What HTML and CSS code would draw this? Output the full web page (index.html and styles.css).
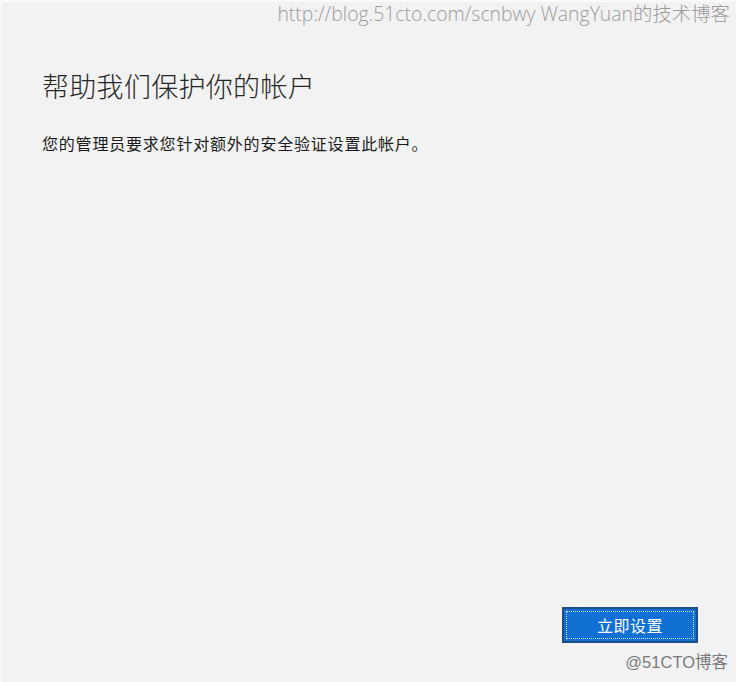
FILE: index.html
```html
<!DOCTYPE html>
<html lang="zh-CN">
<head>
<meta charset="utf-8">
<title>帮助我们保护你的帐户</title>
<link rel="stylesheet" href="styles.css">
</head>
<body>
<div class="page">
  <div class="watermark-top">http://blog.51cto.com/scnbwy WangYuan的技术博客</div>
  <main class="content">
    <h1 class="title">帮助我们保护你的帐户</h1>
    <p class="desc">您的管理员要求您针对额外的安全验证设置此帐户。</p>
  </main>
  <div class="actions">
    <button class="btn-primary" type="button">立即设置</button>
  </div>
  <div class="watermark-bottom">@51CTO博客</div>
</div>
</body>
</html>
```

FILE: styles.css
```css
html, body {
  margin: 0;
  padding: 0;
}
body {
  background: #f2f2f2;
  font-family: "Noto Sans CJK SC", "Noto Sans", "Liberation Sans", sans-serif;
  color: #1f1f1f;
}
.page {
  width: 736px;
  height: 682px;
  box-sizing: border-box;
  display: flex;
  flex-direction: column;
  border-top: 2px solid #fafafa;
  border-left: 2px solid #f8f8f8;
}
.watermark-top {
  align-self: flex-end;
  padding-right: 6px;
  font-family: "Open Sans", "Noto Sans CJK SC", sans-serif;
  font-weight: 300;
  font-size: 19.4px;
  line-height: 24px;
  color: #9c9c9c;
  white-space: nowrap;
}
.content {
  flex: 1;
  padding-left: 40px;
}
.title {
  margin: 42px 0 0 0;
  font-size: 27px;
  line-height: 36px;
  font-weight: 300;
  color: #262626;
  letter-spacing: 0.3px;
}
.desc {
  margin: 27px 0 0 0;
  font-size: 16px;
  line-height: 24px;
  letter-spacing: 0.8px;
  color: #1a1a1a;
}
.actions {
  display: flex;
  justify-content: flex-end;
  padding-right: 38px;
}
.btn-primary {
  width: 136px;
  height: 36px;
  box-sizing: border-box;
  border: 2px solid #1d4f84;
  background: #1170d4;
  color: #ffffff;
  font-family: "Noto Sans CJK SC", sans-serif;
  font-size: 16px;
  letter-spacing: 0.5px;
  outline: 1px dotted #cfe3f7;
  outline-offset: -5px;
  padding: 0;
  cursor: pointer;
}
.watermark-bottom {
  align-self: flex-end;
  padding-right: 8px;
  margin-top: 10px;
  margin-bottom: 11px;
  font-family: "Liberation Sans", "Noto Sans CJK SC", sans-serif;
  font-size: 16.5px;
  line-height: 18px;
  color: #7a7a7a;
}
```
